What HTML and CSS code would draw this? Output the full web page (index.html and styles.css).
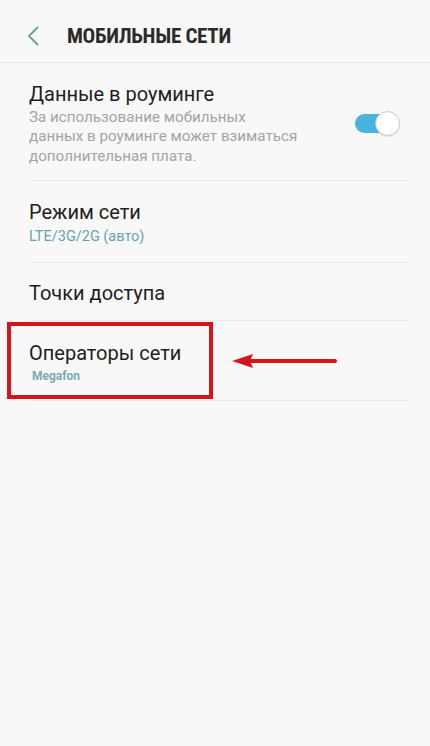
FILE: index.html
```html
<!DOCTYPE html>
<html lang="ru">
<head>
<meta charset="utf-8">
<link rel="stylesheet" href="styles.css">
</head>
<body>
<div class="screen">
  <header class="header">
    <svg class="back" width="12" height="20" viewBox="0 0 12 20"><path d="M10.5 1.5 L2 10 L10.5 18.5" fill="none" stroke="#6c9ea1" stroke-width="1.8" stroke-linecap="round" stroke-linejoin="round"/></svg>
    <h1 class="title">МОБИЛЬНЫЕ СЕТИ</h1>
  </header>
  <ul class="list">
    <li class="row row-roaming">
      <div class="texts">
        <div class="row-title">Данные в роуминге</div>
        <div class="row-desc">За использование мобильных<br>данных в роуминге может взиматься<br>дополнительная плата.</div>
      </div>
      <div class="switch"><span class="knob"></span></div>
    </li>
    <li class="row row-mode">
      <div class="texts">
        <div class="row-title">Режим сети</div>
        <div class="row-value">LTE/3G/2G (авто)</div>
      </div>
    </li>
    <li class="row row-apn">
      <div class="texts">
        <div class="row-title">Точки доступа</div>
      </div>
    </li>
    <li class="row row-ops">
      <div class="texts">
        <div class="row-title">Операторы сети</div>
        <div class="row-op">Megafon</div>
      </div>
      <span class="highlight"></span>
      <svg class="arrow" width="108" height="18" viewBox="0 0 108 18"><path d="M20 9 L104 9" stroke="#d9151c" stroke-width="4" stroke-linecap="round"/><path d="M1 9 L22 2 L19 9 L22 16 Z" fill="#d9151c"/></svg>
    </li>
  </ul>
</div>
</body>
</html>
```
FILE: styles.css
```css
html, body {
  margin: 0;
  padding: 0;
  background: #f8f8f8;
}
.screen {
  width: 430px;
  min-height: 746px;
  background: #f8f8f8;
  font-family: Roboto, "Noto Sans", "Liberation Sans", sans-serif;
  color: #1f1f1f;
}
.header {
  height: 63px;
  display: flex;
  align-items: center;
  padding-left: 27px;
  padding-top: 10px;
  border-bottom: 1px solid #e6e6e6;
  box-sizing: border-box;
}
.back {
  display: block;
}
.title {
  margin: 0 0 0 28px;
  font-family: "Roboto Condensed", "Liberation Sans Narrow", Roboto, sans-serif;
  font-weight: 700;
  font-size: 21px;
  color: #2b2b2b;
  letter-spacing: -0.3px;
}
.list {
  list-style: none;
  margin: 0;
  padding: 0;
}
.row {
  position: relative;
  display: flex;
  align-items: center;
  margin: 0 19px 0 29px;
  border-bottom: 1px solid #e9e9e9;
  box-sizing: border-box;
}
.texts {
  flex: 1;
}
.row-title {
  font-size: 20px;
  line-height: 24px;
  color: #1e1e1e;
}
.row-desc {
  font-size: 15.2px;
  line-height: 19.5px;
  color: #a4a4a4;
  margin-top: 2px;
}
.row-value {
  font-size: 14.5px;
  line-height: 18px;
  color: #62a5ab;
  margin-top: 4px;
}
.row-op {
  font-size: 12px;
  line-height: 14px;
  font-weight: 700;
  color: #7fa9ae;
  margin-top: 4px;
  margin-left: 3px;
}
.row-roaming {
  height: 118px;
  padding-top: 5px;
}
.row-mode {
  height: 82px;
  padding-top: 2px;
}
.row-apn {
  height: 58px;
  padding-top: 2px;
}
.row-ops {
  height: 80px;
  padding-top: 2px;
}
.switch {
  position: relative;
  width: 45px;
  height: 25px;
  margin-right: 11px;
  margin-top: -1px;
}
.switch::before {
  content: "";
  position: absolute;
  left: 0;
  top: 3px;
  width: 38px;
  height: 19px;
  border-radius: 10px;
  background: #48b4de;
}
.knob {
  position: absolute;
  right: 0;
  top: 0;
  width: 25px;
  height: 25px;
  box-sizing: border-box;
  border-radius: 50%;
  background: #ffffff;
  border: 1px solid #c9c9c9;
  box-shadow: 0 1px 1px rgba(0,0,0,0.08);
}
.highlight {
  position: absolute;
  left: -22px;
  top: 1px;
  width: 206px;
  height: 77px;
  border: 4px solid #d6151b;
  box-sizing: border-box;
}
.arrow {
  position: absolute;
  left: 202px;
  top: 31px;
}
```
